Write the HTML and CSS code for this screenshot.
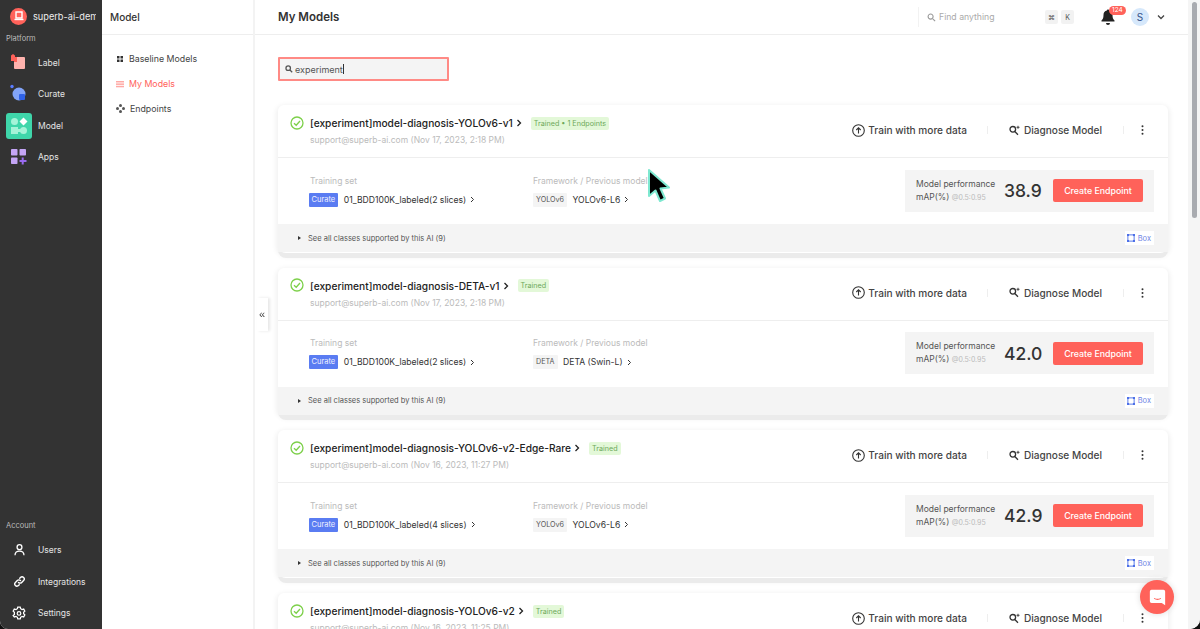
FILE: index.html
```html
<!DOCTYPE html>
<html lang="en">
<head>
<meta charset="utf-8">
<title>My Models</title>
<link rel="stylesheet" href="styles.css">
</head>
<body>
<div class="app">
  <aside class="rail">
    <div class="org">
      <span class="org-logo"><svg width="10" height="10" viewBox="0 0 10 10"><path d="M2 1h6v6H2z" fill="none" stroke="#fff" stroke-width="1.4"/><path d="M0.5 8.5h9" stroke="#fff" stroke-width="1.4"/></svg></span>
      <span class="org-name">superb-ai-demo</span>
    </div>
    <div class="rail-label">Platform</div>
    <a class="rail-item"><span class="rail-icon"><svg width="18" height="20" viewBox="0 0 18 20"><path d="M1 2.500 3 1l2 1.500V8H1z" fill="#ff625a"/><rect x="4" y="4" width="11" height="12" rx="1" fill="#ffb3ae"/><rect x="4" y="4" width="3" height="5" fill="#ff625a"/></svg></span>Label</a>
    <a class="rail-item"><span class="rail-icon"><svg width="20" height="20" viewBox="0 0 20 20"><circle cx="3" cy="2.500" r="1.700" fill="#5a7bff"/><circle cx="10" cy="10" r="6.500" fill="#82a4f8"/><rect x="10" y="10" width="6" height="6" rx="1" fill="#2f62e8"/></svg></span>Curate</a>
    <a class="rail-item"><span class="rail-icon rail-icon-active"><svg width="20" height="20" viewBox="0 0 20 20"><circle cx="5.500" cy="5.500" r="3.500" fill="#a5f3d8"/><path d="M14.500 1.500 18.500 5.500 14.500 9.500 10.500 5.500z" fill="#fff"/><rect x="2" y="11" width="7" height="7" fill="#a5f3d8"/><circle cx="14.500" cy="14.500" r="3.500" fill="#a5f3d8"/><rect x="8" y="13" width="4" height="3" fill="#a5f3d8"/></svg></span>Model</a>
    <a class="rail-item"><span class="rail-icon"><svg width="20" height="20" viewBox="0 0 20 20"><rect x="2" y="2" width="6.500" height="6.500" rx=".8" fill="#c4a5f5"/><rect x="10.500" y="2" width="6.500" height="6.500" rx=".8" fill="#c4a5f5"/><rect x="2" y="10.500" width="6.500" height="6.500" rx=".8" fill="#c4a5f5"/><path d="M13.700 10.500v7M10.500 14h7" stroke="#9a6bf0" stroke-width="2"/></svg></span>Apps</a>
    <div class="rail-spacer"></div>
    <div class="rail-label rail-label-account">Account</div>
    <a class="rail-item"><span class="rail-icon"><svg width="13" height="14" viewBox="0 0 16 16" fill="none" stroke="#fff" stroke-width="1.600"><circle cx="8" cy="4.500" r="3"/><path d="M2.500 14.500c0-3 2.300-5 5.500-5s5.500 2 5.500 5"/></svg></span>Users</a>
    <a class="rail-item"><span class="rail-icon"><svg width="13" height="13" viewBox="0 0 16 16" fill="none" stroke="#fff" stroke-width="1.700" stroke-linecap="round"><path d="M6.800 9.200a2.700 2.700 0 0 0 3.900 0l2.300-2.300a2.700 2.700 0 0 0-3.800-3.900L8.300 3.900"/><path d="M9.200 6.800a2.700 2.700 0 0 0-3.900 0L3 9.100a2.700 2.700 0 0 0 3.800 3.900l.9-.9"/></svg></span>Integrations</a>
    <a class="rail-item"><span class="rail-icon"><svg width="14" height="14" viewBox="0 0 16 17" fill="none" stroke="#fff" stroke-width="1.500"><path d="M6.500 1.300h3l.5 2 1.700 1 2-.6 1.400 2.600-1.500 1.400v1.600l1.500 1.400-1.400 2.600-2-.6-1.700 1-.5 2h-3l-.5-2-1.700-1-2 .6L.9 11.700l1.500-1.400V7.700L.9 6.300l1.400-2.600 2 .6 1.700-1z"/><circle cx="8" cy="9" r="2.200"/></svg></span>Settings</a>
  </aside>

  <nav class="subnav">
    <div class="subnav-title">Model</div>
    <ul class="subnav-list">
      <li class="subnav-item"><svg width="8" height="8" viewBox="0 0 8 8" fill="#333"><rect x="1" y="1" width="2.500" height="2.500"/><rect x="4.500" y="1" width="2.500" height="2.500"/><rect x="1" y="4.500" width="2.500" height="2.500"/><rect x="4.500" y="4.500" width="2.500" height="2.500"/></svg>Baseline Models</li>
      <li class="subnav-item subnav-item-active"><svg width="8" height="8" viewBox="0 0 8 8" fill="#ffa9a5"><rect x="0" y="1" width="8" height="1.500"/><rect x="0" y="3.400" width="8" height="1.500"/><rect x="0" y="5.800" width="8" height="1.500"/></svg>My Models</li>
      <li class="subnav-item"><svg width="9" height="9" viewBox="0 0 9 9" fill="#555"><circle cx="4.500" cy="1.500" r="1.500"/><circle cx="4.500" cy="7.500" r="1.500"/><circle cx="1.500" cy="4.500" r="1.500"/><circle cx="7.500" cy="4.500" r="1.500"/></svg>Endpoints</li>
    </ul>
  </nav>

  <main class="main">
    <header class="topbar">
      <h1 class="page-title">My Models</h1>
      <div class="find">
        <svg width="9" height="9" viewBox="0 0 10 10" fill="none" stroke="#999" stroke-width="1.200"><circle cx="4" cy="4" r="2.800"/><path d="M6.200 6.200 9 9"/></svg>
        <span class="find-text">Find anything</span>
        <span class="kbd">⌘</span><span class="kbd">K</span>
      </div>
      <div class="bell">
        <svg width="14" height="16" viewBox="0 0 14 16" fill="#222"><path d="M7 0.500c.7 0 1.100.5 1.100 1.100 2.200.5 3.400 2.200 3.400 4.400 0 3 .7 4.300 2 5.500v1H.5v-1c1.300-1.200 2-2.500 2-5.500 0-2.200 1.200-3.900 3.400-4.400C5.900 1 6.300.5 7 .5z"/><path d="M5 14h4a2 2 0 0 1-4 0z"/></svg>
        <span class="bell-badge">124</span>
      </div>
      <span class="avatar">S</span>
      <svg class="caret" width="8" height="6" viewBox="0 0 8 6" fill="none" stroke="#444" stroke-width="1.300"><path d="M1 1.500 4 4.500 7 1.500"/></svg>
    </header>

    <div class="content">
      <div class="search">
        <svg width="8" height="8" viewBox="0 0 10 10" fill="none" stroke="#555" stroke-width="1.600"><circle cx="4" cy="4" r="2.800"/><path d="M6.200 6.200 9 9"/></svg>
        <span class="search-text">experiment</span><span class="search-caret"></span>
      </div>

      <section class="card">
        <div class="card-head">
          <svg class="check" width="14" height="14" viewBox="0 0 14 14" fill="none" stroke="#7dd04a" stroke-width="1.300"><circle cx="7" cy="7" r="6"/><path d="M4 7.200 6.200 9.300 10 5"/></svg>
          <div class="card-titles">
            <div class="title-row"><span class="card-title">[experiment]model-diagnosis-YOLOv6-v1</span><svg class="title-chev" width="6" height="8" viewBox="0 0 6 8" fill="none" stroke="#222" stroke-width="1.300"><path d="M1.500 1 4.500 4 1.500 7"/></svg><span class="tag">Trained • 1 Endpoints</span></div>
            <div class="card-sub">support@superb-ai.com (Nov 17, 2023, 2:18 PM)</div>
          </div>
          <div class="actions">
            <span class="action action-train"><svg width="13" height="13" viewBox="0 0 13 13" fill="none" stroke="#333" stroke-width="1.100"><circle cx="6.500" cy="6.500" r="5.800"/><path d="M6.500 9.500V4M4.300 6 6.500 3.800 8.700 6"/></svg>Train with more data</span>
            <span class="sep sep-train"></span>
            <span class="action action-diag"><svg width="11" height="11" viewBox="0 0 11 11" fill="none" stroke="#333" stroke-width="1.300"><circle cx="3.800" cy="4.300" r="2.800"/><path d="M5.800 6.500 9 9.800"/><path d="M9 .8v3M7.500 2.300h3" stroke-width=".9"/></svg>Diagnose Model</span>
            <span class="sep"></span>
            <svg class="more" width="3" height="10" viewBox="0 0 3 10" fill="#333"><circle cx="1.500" cy="1.200" r="1"/><circle cx="1.500" cy="5" r="1"/><circle cx="1.500" cy="8.800" r="1"/></svg>
          </div>
        </div>
        <div class="card-body">
          <div class="col-train">
            <div class="col-label">Training set</div>
            <div class="col-value"><span class="curate">Curate</span>01_BDD100K_labeled(2 slices)<svg class="mini-chev" width="5" height="7" viewBox="0 0 5 7" fill="none" stroke="#333" stroke-width="1"><path d="M1 1 3.500 3.500 1 6"/></svg></div>
          </div>
          <div class="col-frame">
            <div class="col-label">Framework / Previous model</div>
            <div class="col-value"><span class="fw">YOLOv6</span>YOLOv6-L6<svg class="mini-chev" width="5" height="7" viewBox="0 0 5 7" fill="none" stroke="#333" stroke-width="1"><path d="M1 1 3.500 3.500 1 6"/></svg></div>
          </div>
          <div class="perf">
            <div class="perf-label">Model performance<br>mAP(%) <small>@0.5:0.95</small></div>
            <div class="perf-value">38.9</div>
            <span class="create">Create Endpoint</span>
          </div>
        </div>
        <div class="card-foot">
          <span class="tri"></span><span class="foot-text">See all classes supported by this AI (9)</span>
          <span class="box"><svg width="8" height="8" viewBox="0 0 9 9" fill="none" stroke="#4a6ee8" stroke-width="1"><rect x="1" y="1" width="7" height="7"/><rect x=".2" y=".2" width="1.600" height="1.600" fill="#4a6ee8"/><rect x="7.200" y=".2" width="1.600" height="1.600" fill="#4a6ee8"/><rect x=".2" y="7.200" width="1.600" height="1.600" fill="#4a6ee8"/><rect x="7.200" y="7.200" width="1.600" height="1.600" fill="#4a6ee8"/></svg>Box</span>
        </div>
      </section>

      <section class="card">
        <div class="card-head">
          <svg class="check" width="14" height="14" viewBox="0 0 14 14" fill="none" stroke="#7dd04a" stroke-width="1.300"><circle cx="7" cy="7" r="6"/><path d="M4 7.200 6.200 9.300 10 5"/></svg>
          <div class="card-titles">
            <div class="title-row"><span class="card-title">[experiment]model-diagnosis-DETA-v1</span><svg class="title-chev" width="6" height="8" viewBox="0 0 6 8" fill="none" stroke="#222" stroke-width="1.300"><path d="M1.500 1 4.500 4 1.500 7"/></svg><span class="tag">Trained</span></div>
            <div class="card-sub">support@superb-ai.com (Nov 17, 2023, 2:18 PM)</div>
          </div>
          <div class="actions">
            <span class="action action-train"><svg width="13" height="13" viewBox="0 0 13 13" fill="none" stroke="#333" stroke-width="1.100"><circle cx="6.500" cy="6.500" r="5.800"/><path d="M6.500 9.500V4M4.300 6 6.500 3.800 8.700 6"/></svg>Train with more data</span>
            <span class="sep sep-train"></span>
            <span class="action action-diag"><svg width="11" height="11" viewBox="0 0 11 11" fill="none" stroke="#333" stroke-width="1.300"><circle cx="3.800" cy="4.300" r="2.800"/><path d="M5.800 6.500 9 9.800"/><path d="M9 .8v3M7.500 2.300h3" stroke-width=".9"/></svg>Diagnose Model</span>
            <span class="sep"></span>
            <svg class="more" width="3" height="10" viewBox="0 0 3 10" fill="#333"><circle cx="1.500" cy="1.200" r="1"/><circle cx="1.500" cy="5" r="1"/><circle cx="1.500" cy="8.800" r="1"/></svg>
          </div>
        </div>
        <div class="card-body">
          <div class="col-train">
            <div class="col-label">Training set</div>
            <div class="col-value"><span class="curate">Curate</span>01_BDD100K_labeled(2 slices)<svg class="mini-chev" width="5" height="7" viewBox="0 0 5 7" fill="none" stroke="#333" stroke-width="1"><path d="M1 1 3.500 3.500 1 6"/></svg></div>
          </div>
          <div class="col-frame">
            <div class="col-label">Framework / Previous model</div>
            <div class="col-value"><span class="fw">DETA</span>DETA (Swin-L)<svg class="mini-chev" width="5" height="7" viewBox="0 0 5 7" fill="none" stroke="#333" stroke-width="1"><path d="M1 1 3.500 3.500 1 6"/></svg></div>
          </div>
          <div class="perf">
            <div class="perf-label">Model performance<br>mAP(%) <small>@0.5:0.95</small></div>
            <div class="perf-value">42.0</div>
            <span class="create">Create Endpoint</span>
          </div>
        </div>
        <div class="card-foot">
          <span class="tri"></span><span class="foot-text">See all classes supported by this AI (9)</span>
          <span class="box"><svg width="8" height="8" viewBox="0 0 9 9" fill="none" stroke="#4a6ee8" stroke-width="1"><rect x="1" y="1" width="7" height="7"/><rect x=".2" y=".2" width="1.600" height="1.600" fill="#4a6ee8"/><rect x="7.200" y=".2" width="1.600" height="1.600" fill="#4a6ee8"/><rect x=".2" y="7.200" width="1.600" height="1.600" fill="#4a6ee8"/><rect x="7.200" y="7.200" width="1.600" height="1.600" fill="#4a6ee8"/></svg>Box</span>
        </div>
      </section>

      <section class="card">
        <div class="card-head">
          <svg class="check" width="14" height="14" viewBox="0 0 14 14" fill="none" stroke="#7dd04a" stroke-width="1.300"><circle cx="7" cy="7" r="6"/><path d="M4 7.200 6.200 9.300 10 5"/></svg>
          <div class="card-titles">
            <div class="title-row"><span class="card-title">[experiment]model-diagnosis-YOLOv6-v2-Edge-Rare</span><svg class="title-chev" width="6" height="8" viewBox="0 0 6 8" fill="none" stroke="#222" stroke-width="1.300"><path d="M1.500 1 4.500 4 1.500 7"/></svg><span class="tag">Trained</span></div>
            <div class="card-sub">support@superb-ai.com (Nov 16, 2023, 11:27 PM)</div>
          </div>
          <div class="actions">
            <span class="action action-train"><svg width="13" height="13" viewBox="0 0 13 13" fill="none" stroke="#333" stroke-width="1.100"><circle cx="6.500" cy="6.500" r="5.800"/><path d="M6.500 9.500V4M4.300 6 6.500 3.800 8.700 6"/></svg>Train with more data</span>
            <span class="sep sep-train"></span>
            <span class="action action-diag"><svg width="11" height="11" viewBox="0 0 11 11" fill="none" stroke="#333" stroke-width="1.300"><circle cx="3.800" cy="4.300" r="2.800"/><path d="M5.800 6.500 9 9.800"/><path d="M9 .8v3M7.500 2.300h3" stroke-width=".9"/></svg>Diagnose Model</span>
            <span class="sep"></span>
            <svg class="more" width="3" height="10" viewBox="0 0 3 10" fill="#333"><circle cx="1.500" cy="1.200" r="1"/><circle cx="1.500" cy="5" r="1"/><circle cx="1.500" cy="8.800" r="1"/></svg>
          </div>
        </div>
        <div class="card-body">
          <div class="col-train">
            <div class="col-label">Training set</div>
            <div class="col-value"><span class="curate">Curate</span>01_BDD100K_labeled(4 slices)<svg class="mini-chev" width="5" height="7" viewBox="0 0 5 7" fill="none" stroke="#333" stroke-width="1"><path d="M1 1 3.500 3.500 1 6"/></svg></div>
          </div>
          <div class="col-frame">
            <div class="col-label">Framework / Previous model</div>
            <div class="col-value"><span class="fw">YOLOv6</span>YOLOv6-L6<svg class="mini-chev" width="5" height="7" viewBox="0 0 5 7" fill="none" stroke="#333" stroke-width="1"><path d="M1 1 3.500 3.500 1 6"/></svg></div>
          </div>
          <div class="perf">
            <div class="perf-label">Model performance<br>mAP(%) <small>@0.5:0.95</small></div>
            <div class="perf-value">42.9</div>
            <span class="create">Create Endpoint</span>
          </div>
        </div>
        <div class="card-foot">
          <span class="tri"></span><span class="foot-text">See all classes supported by this AI (9)</span>
          <span class="box"><svg width="8" height="8" viewBox="0 0 9 9" fill="none" stroke="#4a6ee8" stroke-width="1"><rect x="1" y="1" width="7" height="7"/><rect x=".2" y=".2" width="1.600" height="1.600" fill="#4a6ee8"/><rect x="7.200" y=".2" width="1.600" height="1.600" fill="#4a6ee8"/><rect x=".2" y="7.200" width="1.600" height="1.600" fill="#4a6ee8"/><rect x="7.200" y="7.200" width="1.600" height="1.600" fill="#4a6ee8"/></svg>Box</span>
        </div>
      </section>

      <section class="card">
        <div class="card-head">
          <svg class="check" width="14" height="14" viewBox="0 0 14 14" fill="none" stroke="#7dd04a" stroke-width="1.300"><circle cx="7" cy="7" r="6"/><path d="M4 7.200 6.200 9.300 10 5"/></svg>
          <div class="card-titles">
            <div class="title-row"><span class="card-title">[experiment]model-diagnosis-YOLOv6-v2</span><svg class="title-chev" width="6" height="8" viewBox="0 0 6 8" fill="none" stroke="#222" stroke-width="1.300"><path d="M1.500 1 4.500 4 1.500 7"/></svg><span class="tag">Trained</span></div>
            <div class="card-sub">support@superb-ai.com (Nov 16, 2023, 11:25 PM)</div>
          </div>
          <div class="actions">
            <span class="action action-train"><svg width="13" height="13" viewBox="0 0 13 13" fill="none" stroke="#333" stroke-width="1.100"><circle cx="6.500" cy="6.500" r="5.800"/><path d="M6.500 9.500V4M4.300 6 6.500 3.800 8.700 6"/></svg>Train with more data</span>
            <span class="sep sep-train"></span>
            <span class="action action-diag"><svg width="11" height="11" viewBox="0 0 11 11" fill="none" stroke="#333" stroke-width="1.300"><circle cx="3.800" cy="4.300" r="2.800"/><path d="M5.800 6.500 9 9.800"/><path d="M9 .8v3M7.500 2.300h3" stroke-width=".9"/></svg>Diagnose Model</span>
            <span class="sep"></span>
            <svg class="more" width="3" height="10" viewBox="0 0 3 10" fill="#333"><circle cx="1.500" cy="1.200" r="1"/><circle cx="1.500" cy="5" r="1"/><circle cx="1.500" cy="8.800" r="1"/></svg>
          </div>
        </div>
      </section>
    </div>

    <div class="scrollbar"><div class="scroll-thumb"></div></div>
  </main>
</div>

<button class="collapse">«</button>
<svg class="cursor" width="30" height="40" viewBox="0 0 30 40"><path d="M4 3 4 29 10.500 23.500 15 34 20 31.500 15.500 21.500 24 20.500z" fill="#000" stroke="#7ee8d0" stroke-width="2" stroke-linejoin="round"/></svg>
<div class="chat"><svg width="20" height="20" viewBox="0 0 20 20"><path d="M3 1h14a2 2 0 0 1 2 2v16l-4-2.500H3a2 2 0 0 1-2-2V3a2 2 0 0 1 2-2z" fill="#fff"/><path d="M6 11c2.500 1.500 5.500 1.500 8 0" fill="none" stroke="#ff625a" stroke-width="1.200"/></svg></div>
</body>
</html>
```
FILE: styles.css
```css
* { box-sizing: border-box; }
html, body { margin: 0; height: 100%; overflow: hidden; }
body { font-family: Inter, "Liberation Sans", sans-serif; color: #333; background: #111; }
ul { list-style: none; margin: 0; padding: 0; }
h1 { margin: 0; }
.app { display: flex; height: 629px; background: #fff; border-radius: 0 0 10px 8px; overflow: hidden; }

.rail { width: 102px; flex: none; background: #333; color: #e8e8e8; display: flex; flex-direction: column; padding: 7px 0 0 0; }
.org { display: flex; align-items: center; height: 18px; padding-left: 10px; gap: 6px; overflow: hidden; }
.org-logo { width: 17px; height: 17px; border-radius: 50%; background: #ff625a; display: flex; align-items: center; justify-content: center; flex: none; }
.org-name { font-size: 9.200px; white-space: nowrap; width: 63px; overflow: hidden; color: #eee; }
.rail-label { font-size: 7.500px; color: #bbb; padding-left: 6px; margin-top: 9px; height: 10px; line-height: 10px; margin-bottom: 3px; }
.rail-label-account { margin-bottom: 4px; }
.rail-item { display: flex; align-items: center; height: 31.500px; font-size: 8.500px; color: #e4e4e4; gap: 6px; padding-left: 6px; }
.rail-icon { width: 26px; height: 26px; flex: none; display: flex; align-items: center; justify-content: center; border-radius: 3px; }
.rail-icon-active { background: #3fd6aa; }
.rail-spacer { flex: 1; }

.subnav { width: 153px; flex: none; border-right: 2px solid #f3f3f3; }
.subnav-title { height: 35px; border-bottom: 1px solid #eee; display: flex; align-items: center; padding-left: 8px; font-size: 10px; font-weight: 500; color: #333; }
.subnav-list { padding-top: 11px; }
.subnav-item { height: 25px; display: flex; align-items: center; gap: 5px; padding-left: 14px; font-size: 8.800px; color: #444; }
.subnav-item-active { color: #ff625a; }

.main { flex: 1; min-width: 0; display: flex; flex-direction: column; position: relative; padding-right: 12px; }
.topbar { height: 35px; flex: none; border-bottom: 1px solid #eee; display: flex; align-items: center; padding-left: 23px; }
.page-title { font-size: 11.500px; font-weight: 600; color: #333; flex: 1; }
.find { display: flex; align-items: center; width: 166px; border-left: 1px solid #f2f2f2; padding-left: 8px; gap: 3px; height: 20px; }
.find-text { font-size: 8.700px; color: #aaa; flex: 1; }
.kbd { width: 13px; height: 14px; background: #f2f2f2; border-radius: 2px; font-size: 7px; color: #555; display: flex; align-items: center; justify-content: center; }
.find .kbd:last-child { margin-right: 10px; }
.bell { position: relative; width: 14px; height: 16px; margin-left: 17px; }
.bell-badge { position: absolute; left: 8px; top: -3px; background: #ff625a; color: #fff; font-size: 6.500px; padding: 0 3px; height: 9px; line-height: 9px; border-radius: 5px; }
.avatar { width: 18px; height: 18px; border-radius: 50%; background: #d6e8fb; color: #34528a; font-size: 10px; display: flex; align-items: center; justify-content: center; margin-left: 16px; }
.caret { margin-left: 8px; margin-right: 23px; }

.content { flex: 1; min-height: 0; overflow: hidden; padding: 22px 20px 0 23px; }
.search { width: 171px; height: 24px; border: 2px solid #ff8a85; border-radius: 1px; background: #f4f4f4; display: flex; align-items: center; padding-left: 5px; gap: 2px; }
.search-text { font-size: 9px; color: #555; }
.search-caret { width: 1px; height: 10px; background: #333; margin-left: -2px; }

.card { height: 147.700px; margin-top: 24px; background: #fff; border-radius: 6px 6px 8px 8px; box-shadow: 0 5px 0 #ebebeb, 0 2px 5px 2px #f1f1f1; position: relative; }
.card + .card { margin-top: 15px; }
.card-head { height: 53px; display: flex; align-items: center; border-bottom: 1px solid #eee; padding-left: 12px; }
.check { flex: none; margin-top: -17px; }
.card-titles { margin-left: 6px; flex: 1; min-width: 0; }
.title-row { display: flex; align-items: center; height: 14px; }
.card-title { font-size: 10.200px; font-weight: 500; color: #222; white-space: nowrap; }
.title-chev { margin-left: 3px; }
.tag { background: #e3f8d8; color: #6da85a; font-size: 7.200px; height: 13px; line-height: 13px; padding: 0 3px; border-radius: 2px; margin-left: 9px; }
.card-sub { font-size: 8.500px; color: #bbb; margin-top: 4px; line-height: 12px; }
.actions { display: flex; align-items: center; padding-right: 24px; margin-top: -2px; }
.action { display: flex; align-items: center; font-size: 10.100px; font-weight: 500; color: #444; white-space: nowrap; }
.action-train svg { margin-right: 3px; }
.action-diag svg { margin-right: 4px; }
.sep { width: 1px; height: 8px; background: #eee; margin: 0 20px 0 21px; }
.sep-train { margin: 0 21px 0 20px; }
.more { margin-left: -3px; }

.card-body { height: 66px; display: flex; align-items: center; padding: 0 14px 0 31px; }
.col-train { width: 224px; }
.col-train .col-label { margin-left: 1px; }
.col-frame { flex: 1; }
.col-label { font-size: 8.500px; color: #bbb; line-height: 11px; }
.col-value { display: flex; align-items: center; margin-top: 6px; height: 14px; font-size: 8.650px; color: #333; white-space: nowrap; }
.curate { background: #5a7cf2; color: #f0f0ff; font-size: 7.500px; height: 14px; line-height: 14px; padding: 0 2.500px; border-radius: 1px; margin-right: 6px; }
.fw { background: #f4f4f4; color: #555; font-size: 7.200px; height: 14px; line-height: 14px; padding: 0 3px; border-radius: 1px; margin-right: 5.500px; }
.mini-chev { margin-left: 4px; }
.perf { width: 249px; height: 42px; background: #f4f4f4; display: flex; align-items: center; padding: 0 11px; margin-top: -1px; }
.perf-label { font-size: 8.500px; line-height: 13px; color: #555; white-space: nowrap; width: 88px; }
.perf-label small { font-size: 7px; color: #bbb; }
.perf-value { font-size: 17.500px; font-weight: 500; color: #333; width: 49px; }
.create { background: #ff625a; color: #fff; font-size: 8.800px; font-weight: 500; width: 90px; height: 23px; display: flex; align-items: center; justify-content: center; border-radius: 2px; margin-left: auto; }

.card-foot { height: 28px; background: #f4f4f4; display: flex; align-items: center; padding: 0 14px 0 20px; }
.tri { width: 0; height: 0; border-left: 3px solid #333; border-top: 2.500px solid transparent; border-bottom: 2.500px solid transparent; margin-right: 7px; }
.foot-text { font-size: 7.500px; color: #555; flex: 1; }
.box { background: #fff; display: flex; align-items: center; gap: 3px; font-size: 7.500px; color: #7288e6; height: 14px; padding: 0 3px 0 2px; }

.scrollbar { position: absolute; right: 0; top: 0; bottom: 0; width: 12px; background: #f5f5f5; }
.scroll-thumb { width: 5px; height: 216px; margin: 2px 0 0 4px; background: #a9abb0; border-radius: 3px; }

.collapse { position: fixed; left: 257px; top: 298px; width: 11px; height: 33px; padding: 0 1px 0 0; border: none; background: #fff; color: #444; font-size: 11px; line-height: 33px; box-shadow: 2px 0 3px #e6e6e6; }
.cursor { position: fixed; left: 645px; top: 167px; }
.chat { position: fixed; left: 1140px; top: 580px; width: 34px; height: 34px; border-radius: 50%; background: #ff625a; display: flex; align-items: center; justify-content: center; box-shadow: 0 0 6px #ddd; }
.chat svg { width: 17px; height: 17px; }
```
